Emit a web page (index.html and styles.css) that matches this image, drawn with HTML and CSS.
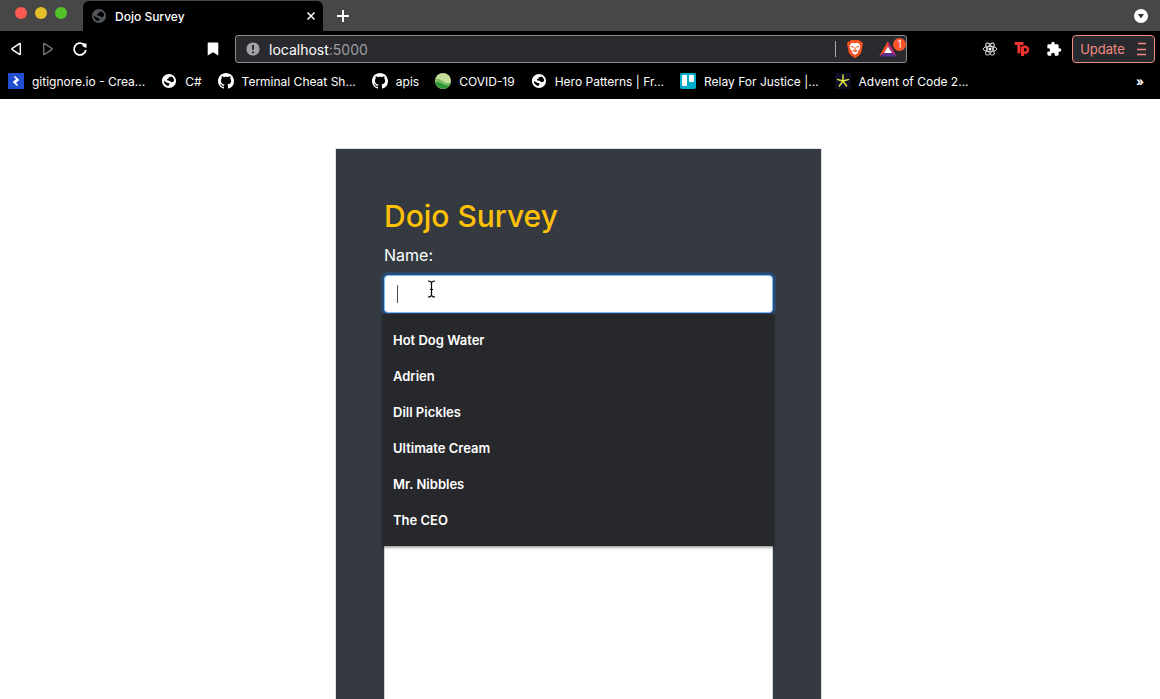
FILE: index.html
```html
<!DOCTYPE html>
<html lang="en">
<head>
<meta charset="utf-8">
<meta name="viewport" content="width=device-width, initial-scale=1">
<title>Dojo Survey</title>
<link rel="stylesheet" href="styles.css">
</head>
<body>
<svg class="symbols" aria-hidden="true">
  <symbol id="globe" viewBox="0 0 24 24">
    <path fill="currentColor" d="M12 1.500C6.200 1.500 1.500 6.200 1.500 12S6.200 22.500 12 22.500 22.500 17.800 22.500 12 17.800 1.500 12 1.500ZM11.500 19.500C7.500 19.300 4.300 16 4.300 11.800L9 14.500 12.500 15.500V17.200L11.500 18ZM17.500 13.500 15 14 13.500 12 9 11V9.500L11 8.500 12 6.500 14.500 6 15 4.800C17.800 6 19.700 8.700 19.700 12Z"/>
  </symbol>
  <symbol id="github" viewBox="0 0 16 16">
    <path fill="currentColor" fill-rule="evenodd" d="M8 0C3.58 0 0 3.58 0 8c0 3.54 2.29 6.53 5.47 7.59.4.07.55-.17.55-.38 0-.19-.01-.82-.01-1.49-2.01.37-2.53-.49-2.69-.94-.09-.23-.48-.94-.82-1.13-.28-.15-.68-.52-.01-.53.63-.01 1.08.58 1.23.82.72 1.21 1.87.87 2.33.66.07-.52.28-.87.51-1.07-1.78-.2-3.64-.89-3.64-3.95 0-.87.31-1.59.82-2.15-.08-.2-.36-1.02.08-2.12 0 0 .67-.21 2.2.82.64-.18 1.32-.27 2-.27s1.36.09 2 .27c1.53-1.04 2.2-.82 2.2-.82.44 1.1.16 1.92.08 2.12.51.56.82 1.27.82 2.15 0 3.07-1.87 3.75-3.65 3.95.29.25.54.73.54 1.48 0 1.07-.01 1.93-.01 2.2 0 .21.15.46.55.38A8.01 8.01 0 0 0 16 8c0-4.42-3.58-8-8-8Z"/>
  </symbol>
</svg>

<header class="browser">
  <div class="tab-strip">
    <div class="lights">
      <button class="light close" aria-label="Close window"></button>
      <button class="light minimize" aria-label="Minimize window"></button>
      <button class="light expand" aria-label="Zoom window"></button>
    </div>
    <div class="tab">
      <svg class="icon tab-icon"><use href="#globe"/></svg>
      <span class="tab-title">Dojo Survey</span>
      <button class="tab-close" aria-label="Close tab"><svg viewBox="0 0 10 10"><path d="M1.5 1.5 8.5 8.5M8.5 1.5 1.5 8.5"/></svg></button>
    </div>
    <button class="new-tab" aria-label="New tab"><svg viewBox="0 0 12 12"><path d="M6 0V12M0 6H12"/></svg></button>
    <button class="tab-search" aria-label="Search tabs"><svg viewBox="0 0 14 14"><circle cx="7" cy="7" r="7" fill="#fff"/><path d="M4 5h6L7 9.5Z" fill="#333"/></svg></button>
  </div>

  <div class="toolbar">
    <div class="toolbar-left">
      <button class="tool" aria-label="Back"><svg class="icon" viewBox="0 0 16 16"><path class="line" d="M12.3 3V13Q12.3 13.8 11.5 13.3L4.3 8.6Q3.5 8 4.3 7.4L11.5 2.7Q12.3 2.2 12.3 3Z"/></svg></button>
      <button class="tool muted" aria-label="Forward"><svg class="icon" viewBox="0 0 16 16"><path class="line" d="M3.7 3V13Q3.7 13.8 4.5 13.3L11.7 8.6Q12.5 8 11.7 7.4L4.5 2.7Q3.7 2.2 3.7 3Z"/></svg></button>
      <button class="tool" aria-label="Reload"><svg class="icon" viewBox="0 0 16 16"><path class="line thick" d="M13.8 9A5.9 5.9 0 1 1 12 3.7"/><path fill="#fff" d="M10.2 2.6 14.5 2.6V7L13.2 6.5 10.6 5.2Z"/></svg></button>
      <button class="tool bookmark" aria-label="Bookmark this page"><svg class="icon" viewBox="0 0 16 16"><path fill="#fff" d="M3.5 1.5h9q.8 0 .8.8V14.5L8 11.3 2.7 14.5V2.3q0-.8.8-.8Z"/></svg></button>
    </div>
    <div class="address">
      <button class="site-info" aria-label="Site information"><svg class="icon" viewBox="0 0 16 16"><circle cx="8" cy="8" r="6.6" fill="#a3a3a5"/><path d="M8 4V8.8M8 10.4V12.2" stroke="#292a2d" stroke-width="2"/></svg></button>
      <span class="url">localhost<span class="port">:5000</span></span>
      <span class="divider"></span>
      <button class="shield" aria-label="Brave Shields"><svg viewBox="0 0 18 20"><path fill="#f4511e" d="M5 1H13L14.5 2.8 16 2.6 17 5 16.5 7 15.3 13.5 13.6 16 9 19.2 4.4 16 2.7 13.5 1.5 7 1 5 2 2.6 3.5 2.8Z"/><path fill="#fff" d="M6 3.8 9 4.3 12 3.8 14.4 6.5 14 9.5 12 12.4 12 13.7 9 16 6 13.7 6 12.4 4 9.5 3.6 6.5Z"/><path d="M4.9 7.2 7.7 8.2M13.1 7.2 10.3 8.2M9 8.2V11.5M6.6 11.3 9 12.6 11.4 11.3" fill="none" stroke="#f4511e" stroke-width="1.1"/></svg></button>
      <button class="rewards" aria-label="Brave Rewards">
        <svg viewBox="0 0 18 16"><path fill="#f4482a" d="M9 0 9 5.6 5.2 12 0 15.5Z"/><path fill="#b52c72" d="M9 0 18 15.5 12.8 12 9 5.6Z"/><path fill="#592d91" d="M0 15.5H18L12.8 11.8H5.2Z"/><path fill="#fff" d="M9 5.4 13 12H5Z"/></svg>
        <span class="badge">1</span>
      </button>
    </div>
    <div class="toolbar-right">
      <button class="tool" aria-label="React Developer Tools"><svg class="icon" viewBox="0 0 16 16"><g fill="none" stroke="#e8e8e8" stroke-width=".9"><ellipse cx="8" cy="8" rx="6.8" ry="2.7"/><ellipse cx="8" cy="8" rx="6.8" ry="2.7" transform="rotate(60 8 8)"/><ellipse cx="8" cy="8" rx="6.8" ry="2.7" transform="rotate(120 8 8)"/></g><circle cx="8" cy="8" r="1.5" fill="#fff"/></svg></button>
      <button class="tool" aria-label="Toptal extension"><svg class="icon" viewBox="0 0 16 16"><path d="M.7 2.6H9.5M4.9 2.6V12.3M8.5 5.5V15" fill="none" stroke="#ee3430" stroke-width="3"/><circle cx="11" cy="8.8" r="3" fill="none" stroke="#ee3430" stroke-width="2.5"/></svg></button>
      <button class="tool" aria-label="Extensions"><svg class="icon" viewBox="0 0 24 24"><path fill="#fff" d="M20.5 11H19V7a2 2 0 0 0-2-2h-4V3.500a2.500 2.500 0 0 0-5 0V5H4a2 2 0 0 0-2 2v3.800h1.500a2.700 2.700 0 0 1 0 5.400H2V20a2 2 0 0 0 2 2h3.800v-1.500a2.700 2.700 0 0 1 5.400 0V22H17a2 2 0 0 0 2-2v-4h1.500a2.500 2.500 0 0 0 0-5Z"/></svg></button>
      <button class="update">Update <svg viewBox="0 0 10 14"><path d="M1 1.500H9M0 7.500H9M0 12.500H9"/></svg></button>
    </div>
  </div>

  <nav class="bookmarks" aria-label="Bookmarks">
    <a href="#"><svg class="icon" viewBox="0 0 16 16"><path fill="#204ecf" d="M0 0H16V16H0Z"/><path d="M6.500 3.500 10 7 7 9.500M9.500 12.500 6 9 9 6.500" fill="none" stroke="#fff" stroke-width="1.700"/></svg>gitignore.io - Crea...</a>
    <a href="#"><svg class="icon"><use href="#globe"/></svg>C#</a>
    <a href="#"><svg class="icon"><use href="#github"/></svg>Terminal Cheat Sh...</a>
    <a href="#"><svg class="icon"><use href="#github"/></svg>apis</a>
    <a href="#"><svg class="icon" viewBox="0 0 16 16"><circle cx="8" cy="8" r="8" fill="#c5df9b"/><path fill="#7dbb62" d="M.3 6Q4 5 7.500 8T15.800 9.500A8 8 0 0 1 .3 6Z"/><path fill="#2c9837" d="M.3 9Q4 8.500 8 11T15 12A8 8 0 0 1 .3 9Z"/></svg>COVID-19</a>
    <a href="#"><svg class="icon"><use href="#globe"/></svg>Hero Patterns | Fr...</a>
    <a href="#"><svg class="icon" viewBox="0 0 16 16"><rect width="16" height="16" rx="2" fill="#00aecc"/><rect x="2" y="2" width="5" height="11" rx="1" fill="#fff"/><rect x="9" y="2" width="5" height="7" rx="1" fill="#fff"/></svg>Relay For Justice |...</a>
    <a href="#"><svg class="icon" viewBox="0 0 16 16"><path fill="#0f0f23" d="M0 0H16V16H0Z"/><path d="M8 8V1.500M8 8 14 6.300M8 8 12 13.500M8 8 4 13.500M8 8 2 6.300" stroke="#e8e84a" stroke-width="1.400"/></svg>Advent of Code 2...</a>
    <button class="more" aria-label="More bookmarks">»</button>
  </nav>
</header>

<main class="page">
  <form class="survey">
    <h1>Dojo Survey</h1>
    <label for="name">Name:</label>
    <div class="field">
      <input id="name" type="text" autocomplete="off">
      <span class="caret"></span>
      <svg class="pointer" viewBox="0 0 9 18" aria-hidden="true"><path d="M1 1Q4.500 1 4.500 3.500Q4.500 1 8 1M4.500 3V15M1 17Q4.500 17 4.500 14.500Q4.500 17 8 17M3 9.500H6"/></svg>
      <ul class="suggestions">
        <li>Hot Dog Water</li>
        <li>Adrien</li>
        <li>Dill Pickles</li>
        <li>Ultimate Cream</li>
        <li>Mr. Nibbles</li>
        <li>The CEO</li>
      </ul>
    </div>
    <textarea class="comment" aria-label="Comment"></textarea>
  </form>
</main>
</body>
</html>
```
FILE: styles.css
```css
* { box-sizing: border-box; }

body {
  display: flex;
  flex-direction: column;
  min-height: 100vh;
  margin: 0;
  background: #fff;
  font-family: Inter, "Liberation Sans", sans-serif;
}

button {
  display: flex;
  align-items: center;
  justify-content: center;
  padding: 0;
  border: 0;
  background: none;
  color: inherit;
  font: inherit;
}

svg { display: block; flex: none; }
.symbols { position: absolute; width: 0; height: 0; }
.icon { width: 16px; height: 16px; }

.browser {
  flex: none;
  background: #000;
  color: #fff;
  font-size: 12px;
}

.tab-strip {
  display: flex;
  align-items: center;
  height: 31px;
  padding: 0 12px 0 15px;
  background: #474747;
}

.lights { display: flex; gap: 8px; width: 68px; padding-bottom: 6px; }
.light { width: 12px; height: 12px; border-radius: 50%; }
.close { background: #ff5a52; }
.minimize { background: #e6c029; }
.expand { background: #53c22b; }

.tab {
  display: flex;
  flex: 0 1 240px;
  align-self: flex-end;
  align-items: center;
  gap: 8px;
  height: 30px;
  padding: 0 7px 0 8px;
  border-radius: 6px 6px 0 0;
  background: #000;
  font-weight: 500;
}

.tab-icon { color: #50545a; }
.tab-title { flex: 1; }
.tab-close svg { width: 10px; height: 10px; }
.new-tab { margin-left: 14px; }
.new-tab svg { width: 12px; height: 12px; }
.tab-close path, .new-tab path { fill: none; stroke: #fff; stroke-width: 2; }
.tab-close path { stroke-width: 1.5; }
.tab-search { margin-left: auto; }
.tab-search svg { width: 14px; height: 14px; }

.toolbar { display: flex; align-items: center; height: 36px; }
.toolbar-left { display: flex; flex: 1 1 226px; padding-right: 6px; }
.toolbar-right {
  display: flex;
  flex: 1 1 244px;
  align-items: center;
  justify-content: flex-end;
  padding-right: 5px;
}
.tool { width: 32px; height: 32px; }
.bookmark { margin-left: auto; }
.line { fill: none; stroke: #fff; stroke-width: 1.5; }
.thick { stroke-width: 1.8; }
.muted .line { stroke: #707070; }

.address {
  display: flex;
  flex: 0 1 672px;
  align-items: center;
  height: 28px;
  padding: 0 9px;
  border: 1px solid #8c8c8e;
  border-radius: 3px;
  background: #292a2d;
  font-size: 14px;
}
.url { flex: 1; margin-left: 8px; }
.port { color: #9c9c9f; }
.divider { width: 1px; height: 16px; background: #aaa; }
.shield { margin-left: 10px; }
.shield svg { width: 18px; height: 20px; }
.rewards { position: relative; margin-left: 15px; }
.rewards svg { width: 18px; height: 16px; }
.badge {
  position: absolute;
  top: -3px;
  right: -9px;
  width: 13px;
  height: 13px;
  border-radius: 50%;
  background: #fb542b;
  font-size: 10px;
  line-height: 13px;
}

.update {
  gap: 12px;
  width: 83px;
  height: 28px;
  margin-left: 2px;
  border: 1px solid #f28b82;
  border-radius: 4px;
  background: #292a2d;
  color: #f28b82;
  font-size: 13px;
}
.update svg { width: 10px; height: 14px; }
.update path { stroke: #f28b82; stroke-width: 1.3; }

.bookmarks {
  display: flex;
  align-items: center;
  gap: 16px;
  height: 32px;
  padding: 0 16px 4px 8px;
}
.bookmarks a {
  display: flex;
  align-items: center;
  gap: 8px;
  color: #fff;
  text-decoration: none;
  white-space: nowrap;
}
.more { margin-left: auto; font-weight: 700; }

.page {
  display: flex;
  flex: 1;
  justify-content: center;
  padding: 49px 3px 0 0;
}

.survey {
  display: flex;
  flex: 0 1 487px;
  flex-direction: column;
  padding: 48px 48px 0;
  border: solid #dee2e6;
  border-width: 1px 1px 0;
  background: #343a40;
  color: #fff;
  font-size: 16px;
}

h1 {
  margin: 0 0 8px;
  color: #ffc107;
  font-size: 30px;
  font-weight: 500;
  line-height: 38px;
}

label { margin-bottom: 8px; line-height: 24px; }
.field { position: relative; }

input {
  display: block;
  width: 100%;
  height: 38px;
  padding: 6px 12px;
  border: 1px solid #80bdff;
  border-radius: 4px;
  outline: 0;
  background: #fff;
  box-shadow: 0 0 0 3px #2b4a73;
  font: inherit;
}

.caret {
  position: absolute;
  top: 10px;
  left: 13px;
  width: 1px;
  height: 18px;
  background: #495057;
}

.pointer { position: absolute; top: 5px; left: 43px; width: 9px; height: 18px; }
.pointer path { fill: none; stroke: #000; stroke-width: 1.2; }

.suggestions {
  position: absolute;
  top: 39px;
  right: -1px;
  left: -1px;
  margin: 0;
  padding: 8px 0;
  background: #27282b;
  box-shadow: 0 1px 3px #0008;
  list-style: none;
  font-size: 13px;
  font-weight: 600;
  line-height: 36px;
}
.suggestions li { padding: 0 10px; }

.comment {
  flex: 1;
  margin-top: 200px;
  border: solid #ced4da;
  border-width: 1px 1px 0;
  background: #fff;
  resize: none;
}
```
